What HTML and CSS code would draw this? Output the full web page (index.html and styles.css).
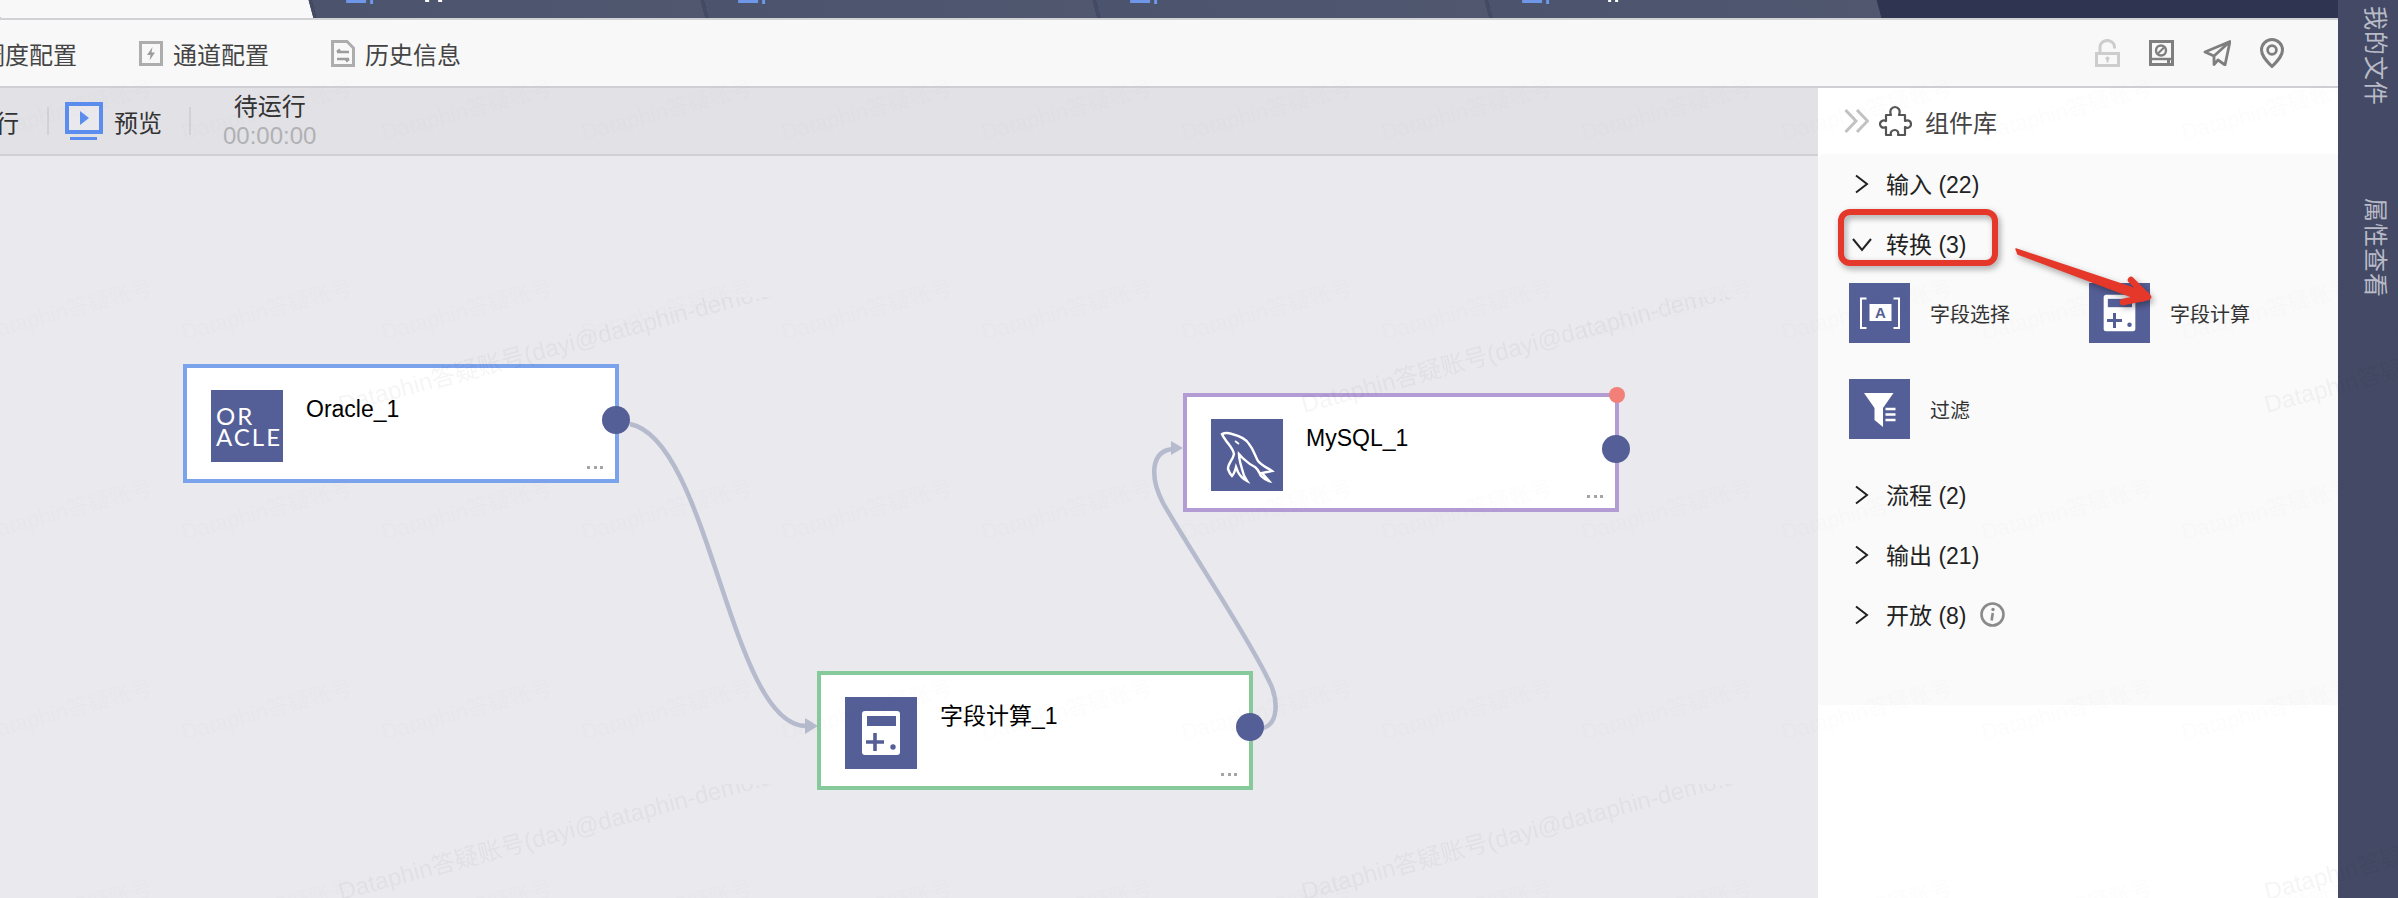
FILE: index.html
```html
<!DOCTYPE html>
<html lang="zh-CN">
<head>
    <meta charset="UTF-8">
    <title>Dataphin</title>
    <link rel="stylesheet" href="styles.css">
</head>
<body>
    <div class="page">
        <div class="main">
            <!-- Tabs, cut off by the top of the window -->
            <div class="tabs">
                <div class="tab tab-active"></div>
                <div class="tab">
                    <svg class="tab-mark" width="100" height="4"><rect x="0" y="0" width="20" height="3" fill="#6f97e8"/><rect x="24" y="0" width="3" height="4" fill="#6f97e8"/><rect x="79" y="0" width="4" height="2" fill="#fff"/><rect x="92" y="0" width="4" height="2" fill="#fff"/></svg>
                </div>
                <div class="tab">
                    <svg class="tab-mark" width="100" height="4"><rect x="0" y="0" width="20" height="3" fill="#6f97e8"/><rect x="24" y="0" width="3" height="4" fill="#6f97e8"/></svg>
                </div>
                <div class="tab">
                    <svg class="tab-mark" width="100" height="4"><rect x="0" y="0" width="20" height="3" fill="#6f97e8"/><rect x="24" y="0" width="3" height="4" fill="#6f97e8"/></svg>
                </div>
                <div class="tab">
                    <svg class="tab-mark" width="100" height="4"><rect x="0" y="0" width="20" height="3" fill="#6f97e8"/><rect x="24" y="0" width="3" height="4" fill="#6f97e8"/><rect x="86" y="0" width="3" height="2" fill="#fff"/><rect x="93" y="0" width="3" height="2" fill="#fff"/></svg>
                </div>
            </div>

            <!-- Config toolbar -->
            <div class="config-bar">
                <div class="config-item">调度配置</div>
                <div class="config-item">
                    <svg width="24" height="25" viewBox="0 0 24 25"><rect x="1.5" y="1.5" width="21" height="22" fill="none" stroke="#adadad" stroke-width="3"/><path d="M13.5 6 L8 14 H11.5 L10.5 19.5 L16 11.5 H12.5 Z" fill="#9c9c9c"/></svg>
                    <span>通道配置</span>
                </div>
                <div class="config-item">
                    <svg width="24" height="27" viewBox="0 0 24 27"><path d="M1.5 1.5 H16 L22.5 8 V25.5 H1.5 Z" fill="none" stroke="#adadad" stroke-width="3"/><path d="M6 12 H18 M6 12 L9 9.5 M6 19 H18 M18 19 L15 21.5" fill="none" stroke="#9c9c9c" stroke-width="2.4"/></svg>
                    <span>历史信息</span>
                </div>
                <div class="config-tools">
                    <svg width="25" height="28" viewBox="0 0 25 28"><rect x="1.5" y="14.5" width="22" height="12" fill="none" stroke="#cdcdcd" stroke-width="3"/><path d="M5 14 V8 A7.2 6.5 0 0 1 19.5 8 V9.5" fill="none" stroke="#cdcdcd" stroke-width="3"/><circle cx="12.5" cy="19.5" r="2" fill="#cdcdcd"/><rect x="11.5" y="20" width="2" height="3.5" fill="#cdcdcd"/></svg>
                    <svg width="25" height="26" viewBox="0 0 25 26"><rect x="1.5" y="1.5" width="22" height="23" fill="none" stroke="#7f7f7f" stroke-width="3"/><circle cx="12" cy="10.5" r="5" fill="none" stroke="#7f7f7f" stroke-width="2.4"/><path d="M9 13.5 L15 7.5" stroke="#7f7f7f" stroke-width="2.2"/><path d="M2 19 H23" stroke="#7f7f7f" stroke-width="2.4"/><rect x="18" y="20" width="3" height="3" fill="#7f7f7f"/></svg>
                    <svg width="28" height="26" viewBox="0 0 28 26"><path d="M27 1.5 L2 12 L11 16 V24.5 L15 20 L22 25 Z M11 16 L27 1.5" fill="none" stroke="#7f7f7f" stroke-width="2.8" stroke-linejoin="round"/></svg>
                    <svg width="24" height="30" viewBox="0 0 24 30"><path d="M12 28.5 C4.5 21 1.5 17 1.5 12 A10.5 10.5 0 0 1 22.5 12 C22.5 17 19.5 21 12 28.5 Z" fill="none" stroke="#7f7f7f" stroke-width="3"/><circle cx="12" cy="12" r="4.4" fill="none" stroke="#7f7f7f" stroke-width="2.8"/></svg>
                </div>
            </div>

            <div class="workspace">
                <div class="canvas-col">
                    <!-- Run toolbar -->
                    <div class="run-bar">
                        <span class="run-cut">行</span>
                        <span class="run-sep"></span>
                        <svg class="preview-icon" width="38" height="38" viewBox="0 0 38 38"><rect x="2" y="2" width="34" height="28" fill="#fff" fill-opacity=".25" stroke="#5b8def" stroke-width="4"/><path d="M15 9 L24 16 L15 23 Z" fill="#5b8def"/><rect x="5" y="35" width="27" height="3" fill="#5b8def"/></svg>
                        <span class="run-label">预览</span>
                        <span class="run-sep run-sep-b"></span>
                        <div class="run-status">
                            <div>待运行</div>
                            <div class="run-time">00:00:00</div>
                        </div>
                    </div>

                    <!-- DAG canvas -->
                    <div class="canvas">
                        <svg class="edges" width="1818" height="742">
                            <path d="M630 268 C710 284 730 570 806 570" fill="none" stroke="#b5bacd" stroke-width="4.5"/>
                            <path d="M818 570 L805 562 V578 Z" fill="#b5bacd"/>
                            <path d="M1263 572 C1278 568 1280 544 1267 521 C1245 476 1190 394 1163 347 C1150 322 1150 295 1173 293" fill="none" stroke="#b5bacd" stroke-width="4.5"/>
                            <path d="M1183 292 L1171 285 V299 Z" fill="#b5bacd"/>
                        </svg>

                        <div class="node node-oracle">
                            <div class="node-icon oracle-logo"><span>OR</span><span>ACLE</span></div>
                            <div class="node-title">Oracle_1</div>
                            <span class="node-more"></span>
                            <span class="node-port"></span>
                        </div>

                        <div class="node node-mysql">
                            <div class="node-icon">
                                <svg width="72" height="72" viewBox="0 0 72 72"><path d="M11 15 C15 13 18 14 21 15 C29 17 35 20 38 25 C43 31 44 37 47 42 C51 47 57 49 61 52 L51 54 L58 62 C54 61 52 59 50 57 C48 53 47 50 44 48 C40 46 37 44 34 41 C31 39 30 37 28 35 C28 41 30 46 31 50 C32 55 34 59 36 62 C32 60 29 57 27 53 L25 48 C24 52 23 55 21 57 C19 55 18 53 17 50 C17 44 22 41 23 35 C22 30 19 27 16 23 C14 20 12 18 11 15 Z" fill="none" stroke="#fff" stroke-width="2.4"/><path d="M24 22 L28 25" stroke="#fff" stroke-width="1.6"/></svg>
                            </div>
                            <div class="node-title">MySQL_1</div>
                            <span class="node-more"></span>
                            <span class="node-alert"></span>
                            <span class="node-port"></span>
                        </div>

                        <div class="node node-calc">
                            <div class="node-icon">
                                <svg width="72" height="72" viewBox="0 0 72 72"><rect x="17" y="14" width="38" height="44" rx="3" fill="#fff"/><rect x="22" y="19" width="29" height="10" fill="#555f97"/><path d="M21 45 H39 M30 36 V54" stroke="#555f97" stroke-width="3.6"/><circle cx="48" cy="50" r="2.7" fill="#555f97"/></svg>
                            </div>
                            <div class="node-title">字段计算_1</div>
                            <span class="node-more"></span>
                            <span class="node-port"></span>
                        </div>
                    </div>
                </div>

                <!-- Component library -->
                <div class="panel">
                    <div class="panel-head">
                        <svg width="25" height="24" viewBox="0 0 25 24"><path d="M1.5 1 L12 12 L1.5 23 M13 1 L23.5 12 L13 23" fill="none" stroke="#c2c2c2" stroke-width="3"/></svg>
                        <svg class="puzzle" width="33" height="32" viewBox="0 0 33 32"><path d="M7 10 H12 C10 5 13 2 16 2 C19 2 22 5 20 10 H26 V16 C30 14 32 17 32 19 C32 22 29 24 26 22 V30 H19 C20 27 18 25 16 25 C13 25 11 27 12 30 H7 V22 C3 24 1 21 1 19 C1 17 4 14 7 16 Z" fill="none" stroke="#555" stroke-width="2.2" stroke-linejoin="round"/></svg>
                        <span>组件库</span>
                    </div>
                    <div class="panel-body">
                        <div class="group-row">
                            <svg class="chevron" width="20" height="20" viewBox="0 0 20 20"><path d="M4 1.5 L15 10 L4 18.5" fill="none" stroke="#222" stroke-width="2"/></svg>
                            <span>输入 (22)</span>
                        </div>
                        <div class="group-row">
                            <svg class="chevron" width="20" height="20" viewBox="0 0 20 20"><path d="M1 5 L10 16 L19 5" fill="none" stroke="#222" stroke-width="2"/></svg>
                            <span>转换 (3)</span>
                        </div>
                        <div class="comp-grid">
                            <div class="comp">
                                <svg class="comp-icon" viewBox="0 0 60 60"><path d="M17 15.5 H11.5 V45 H17 M44 15.5 H49.5 V45 H44" fill="none" stroke="#fff" stroke-width="2"/><rect x="20" y="21" width="22" height="17" fill="#fff"/><text x="31" y="35" class="comp-letter">A</text></svg>
                                <span>字段选择</span>
                            </div>
                            <div class="comp">
                                <svg class="comp-icon" viewBox="0 0 72 72"><rect x="17" y="14" width="38" height="44" rx="3" fill="#fff"/><rect x="22" y="19" width="29" height="10" fill="#555f97"/><path d="M21 45 H39 M30 36 V54" stroke="#555f97" stroke-width="3.6"/><circle cx="48" cy="50" r="2.7" fill="#555f97"/></svg>
                                <span>字段计算</span>
                            </div>
                            <div class="comp">
                                <svg class="comp-icon" viewBox="0 0 60 60"><path d="M14.5 14 H44 L33.5 29 V48 L25 41 V29 Z" fill="#fff"/><path d="M36 30 H46 M36 35.5 H46 M36 41 H46" stroke="#fff" stroke-width="2.4"/></svg>
                                <span>过滤</span>
                            </div>
                        </div>
                        <div class="group-row">
                            <svg class="chevron" width="20" height="20" viewBox="0 0 20 20"><path d="M4 1.5 L15 10 L4 18.5" fill="none" stroke="#222" stroke-width="2"/></svg>
                            <span>流程 (2)</span>
                        </div>
                        <div class="group-row">
                            <svg class="chevron" width="20" height="20" viewBox="0 0 20 20"><path d="M4 1.5 L15 10 L4 18.5" fill="none" stroke="#222" stroke-width="2"/></svg>
                            <span>输出 (21)</span>
                        </div>
                        <div class="group-row">
                            <svg class="chevron" width="20" height="20" viewBox="0 0 20 20"><path d="M4 1.5 L15 10 L4 18.5" fill="none" stroke="#222" stroke-width="2"/></svg>
                            <span>开放 (8)</span>
                            <svg class="info" width="25" height="25" viewBox="0 0 25 25"><circle cx="12.5" cy="12.5" r="11" fill="none" stroke="#8a8a8a" stroke-width="2.6"/><circle cx="13" cy="7.5" r="1.7" fill="#8a8a8a"/><path d="M12.8 11 L11.6 18.5" stroke="#8a8a8a" stroke-width="2.6"/></svg>
                        </div>
                    </div>
                </div>
            </div>
        </div>

        <!-- Right rail -->
        <div class="rail">
            <span>我的文件</span>
            <span>属性查看</span>
        </div>

        <!-- Watermark layer -->
        <svg class="watermark" width="2398" height="898">
            <defs>
                <pattern id="wm-big" patternUnits="userSpaceOnUse" x="-191" y="297" width="963" height="487">
                    <text class="wm-text" font-size="24" transform="translate(532 116) rotate(-15)">Dataphin答疑账号(dayi@dataphin-demo.aliyun.com)</text>
                </pattern>
                <pattern id="wm-small" patternUnits="userSpaceOnUse" x="-20" y="80" width="200" height="200">
                    <text class="wm-text" font-size="22" transform="translate(4 60) rotate(-15)">Dataphin答疑账号</text>
                </pattern>
            </defs>
            <rect class="wm-fill-small" y="20" width="2398" height="878"/>
            <rect class="wm-fill-big" y="20" width="2398" height="878"/>
        </svg>

        <!-- Red hand-drawn annotation -->
        <svg class="annotation" width="2398" height="898">
            <rect x="1841" y="212" width="154" height="51" rx="9" fill="none" stroke="#e5382a" stroke-width="6"/>
            <path d="M2016 249 L2018 254 L2143 301 L2148 293 Z" fill="#e5382a" stroke="#e5382a" stroke-width="1.5" stroke-linejoin="round"/>
            <path d="M2131 280 L2148 297 L2123 302" fill="none" stroke="#e5382a" stroke-width="6.5" stroke-linecap="round" stroke-linejoin="round"/>
        </svg>
    </div>
</body>
</html>
```

FILE: styles.css
```css
:root {
    --node-blue: #555f97;
    --text: #3d3d3d;
}

* {
    box-sizing: border-box;
}

body {
    margin: 0;
    font-family: "Liberation Sans", "Noto Sans CJK SC", sans-serif;
    font-size: 24px;
    color: var(--text);
    overflow: hidden;
}

.page {
    position: relative;
    display: flex;
    width: 2398px;
    height: 898px;
    overflow: hidden;
}

.main {
    flex: 1;
    display: flex;
    flex-direction: column;
    min-width: 0;
}

/* Top tabs */
.tabs {
    display: flex;
    height: 20px;
    flex: none;
    background: #2f3551;
    border-bottom: 2px solid #d0d2d5;
    overflow: hidden;
}

.tab {
    flex: 0 0 392px;
    height: 18px;
    padding-left: 34px;
    background: linear-gradient(90deg, #4c536d, #50576f);
    border-left: 3px solid #454b63;
    transform: skewX(15deg);
}

.tab-active {
    flex: 0 0 313px;
    margin-left: -2px;
    background: #f8f8f8;
    border-left: 0;
    padding: 0;
}

.tab-mark {
    display: block;
    transform: skewX(-15deg);
}

/* Config toolbar */
.config-bar {
    display: flex;
    align-items: center;
    flex: none;
    height: 68px;
    margin-left: -19px;
    padding-right: 54px;
    background: #f8f8f8;
    border-bottom: 2px solid #cfced3;
    gap: 62px;
    color: #444;
}

.config-item {
    display: flex;
    align-items: center;
    gap: 10px;
    white-space: nowrap;
}

.config-tools {
    display: flex;
    align-items: center;
    margin-left: auto;
    gap: 29px;
}

.workspace {
    flex: 1;
    display: flex;
    min-height: 0;
}

.canvas-col {
    flex: 1;
    display: flex;
    flex-direction: column;
    min-width: 0;
}

/* Run toolbar */
.run-bar {
    display: flex;
    align-items: center;
    flex: none;
    height: 68px;
    margin-left: -5px;
    background: #e2e1e6;
    border-bottom: 2px solid #d0d0d5;
    color: #333;
}

.run-cut {
    margin-right: 28px;
}

.run-sep {
    width: 2px;
    height: 28px;
    background: #d2d2d6;
}

.preview-icon {
    margin-left: 16px;
}

.run-label {
    margin-left: 11px;
}

.run-sep-b {
    margin-left: 27px;
}

.run-status {
    margin-left: 32px;
    text-align: center;
    line-height: 29px;
    white-space: nowrap;
}

.run-time {
    color: #b1b1b4;
}

/* Canvas */
.canvas {
    position: relative;
    flex: 1;
    background: #eae9ee;
}

.edges {
    position: absolute;
    top: 0;
    left: 0;
}

.node {
    position: absolute;
    display: flex;
    align-items: flex-start;
    width: 436px;
    height: 119px;
    padding: 22px 24px;
    gap: 23px;
    background: #fff;
    border: 4px solid;
}

.node-oracle {
    left: 183px;
    top: 208px;
    border-color: #7ba3ec;
}

.node-mysql {
    left: 1183px;
    top: 237px;
    border-color: #b39bd4;
}

.node-calc {
    left: 817px;
    top: 515px;
    border-color: #86c99b;
}

.node-icon {
    flex: none;
    width: 72px;
    height: 72px;
    background: var(--node-blue);
}

.node-icon svg {
    display: block;
}

.oracle-logo {
    display: flex;
    flex-direction: column;
    justify-content: center;
    padding-left: 5px;
    font-family: Lato, "Liberation Sans", sans-serif;
    font-size: 24px;
    letter-spacing: 2px;
    line-height: 21px;
    color: #fff;
}

.node-title {
    margin-top: 4px;
    font-size: 23px;
    line-height: 30px;
    color: #000;
}

.node-more {
    position: absolute;
    right: 12px;
    bottom: 10px;
    width: 16px;
    height: 3px;
    background: repeating-linear-gradient(90deg, #a5a5a5 0 3px, transparent 3px 6.5px);
}

.node-port {
    position: absolute;
    top: 38px;
    right: -15px;
    width: 28px;
    height: 28px;
    border-radius: 50%;
    background: var(--node-blue);
}

.node-alert {
    position: absolute;
    top: -10px;
    right: -10px;
    width: 16px;
    height: 16px;
    border-radius: 50%;
    background: #f27f78;
}

/* Component panel */
.panel {
    flex: 0 0 520px;
    display: flex;
    flex-direction: column;
    background: #fff;
}

.panel-head {
    display: flex;
    align-items: center;
    flex: none;
    height: 66px;
    padding-left: 26px;
    color: #444;
}

.puzzle {
    margin-left: 10px;
    margin-right: 13px;
}

.panel-body {
    flex: none;
    padding-bottom: 60px;
    background: #fafafa;
    border-radius: 6px 0 0 0;
    color: #222;
}

.group-row {
    display: flex;
    align-items: center;
    height: 60px;
    padding-left: 34px;
    gap: 14px;
    font-size: 23px;
    white-space: nowrap;
}

.group-row span {
    margin-top: -3px;
}

.group-row .info {
    margin-left: -1px;
    margin-top: -2px;
}

.comp-grid {
    display: grid;
    grid-template-columns: 240px 240px;
    row-gap: 36px;
    margin: 9px 0 26px 31px;
}

.comp {
    display: flex;
    align-items: center;
    gap: 20px;
    font-size: 20px;
    color: #333;
}

.comp-icon {
    width: 61px;
    height: 60px;
    background: var(--node-blue);
}

.comp-letter {
    font-family: "Liberation Sans", sans-serif;
    font-size: 15px;
    font-weight: 700;
    fill: var(--node-blue);
    text-anchor: middle;
}

/* Right rail */
.rail {
    flex: 0 0 60px;
    display: flex;
    flex-direction: column;
    align-items: flex-start;
    padding: 6px 0 0 24px;
    gap: 92px;
    background: #444a65;
    color: #b9bcc8;
}

.rail span {
    writing-mode: vertical-rl;
    text-orientation: sideways;
    letter-spacing: 1px;
    line-height: 26px;
}

/* Overlays */
.watermark,
.annotation {
    position: absolute;
    top: 0;
    left: 0;
    pointer-events: none;
}

.wm-text {
    font-family: "Liberation Sans", "Noto Sans CJK SC", sans-serif;
    fill: #000;
}

.wm-fill-big {
    fill: url(#wm-big);
    opacity: 0.04;
}

.wm-fill-small {
    fill: url(#wm-small);
    opacity: 0.012;
}

.annotation {
    filter: drop-shadow(2px 3px 3px rgba(0, 0, 0, 0.35));
}
```
